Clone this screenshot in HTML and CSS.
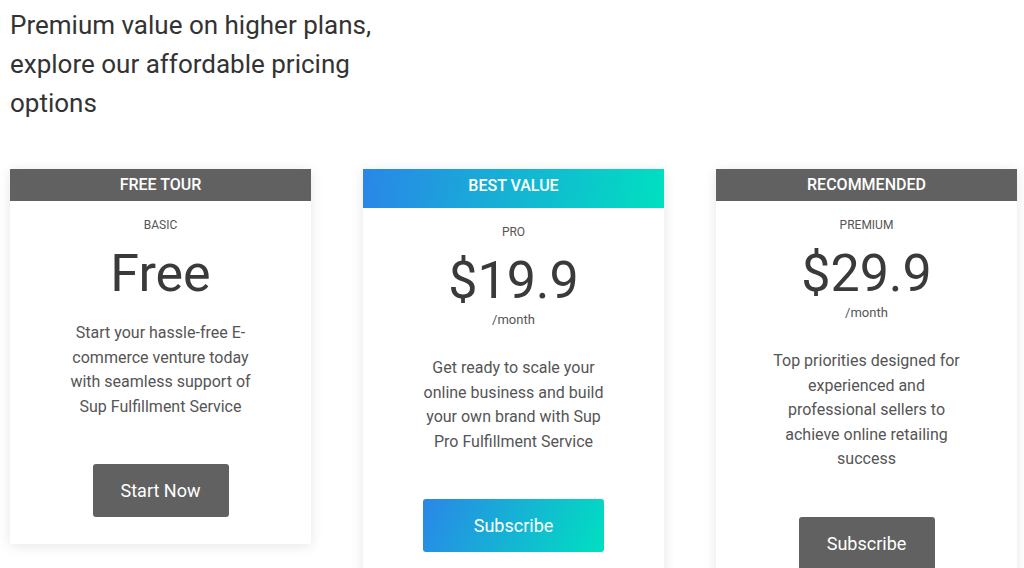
FILE: index.html
```html
<!DOCTYPE html>
<html lang="en">
<head>
<meta charset="utf-8">
<title>Pricing</title>
<link rel="stylesheet" href="styles.css">
</head>
<body>
<h2 class="intro">Premium value on higher plans,<br>explore our affordable pricing<br>options</h2>
<div class="plans">
  <div class="card">
    <div class="card-head">FREE TOUR</div>
    <div class="card-body">
      <div class="tier">BASIC</div>
      <div class="price price-free">Free</div>
      <p class="desc">Start your hassle-free E-commerce venture today with seamless support of Sup Fulfillment Service</p>
      <a class="btn">Start Now</a>
    </div>
  </div>
  <div class="card">
    <div class="card-head card-head-accent">BEST VALUE</div>
    <div class="card-body">
      <div class="tier">PRO</div>
      <div class="price">$19.9</div>
      <div class="period">/month</div>
      <p class="desc">Get ready to scale your online business and build your own brand with Sup Pro Fulfillment Service</p>
      <a class="btn btn-accent">Subscribe</a>
    </div>
  </div>
  <div class="card">
    <div class="card-head">RECOMMENDED</div>
    <div class="card-body">
      <div class="tier">PREMIUM</div>
      <div class="price">$29.9</div>
      <div class="period">/month</div>
      <p class="desc">Top priorities designed for experienced and professional sellers to achieve online retailing success</p>
      <a class="btn">Subscribe</a>
    </div>
  </div>
</div>
</body>
</html>
```

FILE: styles.css
```css
html, body {
  margin: 0;
  padding: 0;
  background: #ffffff;
}
body {
  font-family: Roboto, "Liberation Sans", Arial, sans-serif;
  color: #333;
}
.intro {
  margin: 6px 0 0 10px;
  font-size: 26px;
  line-height: 39px;
  font-weight: 400;
  color: #333333;
}
.plans {
  display: flex;
  align-items: flex-start;
  gap: 52px;
  margin: 46px 0 0 10px;
}
.card {
  width: 301px;
  flex: 0 0 301px;
  background: #fff;
  box-shadow: 0 2px 12px rgba(0, 0, 0, 0.10);
}
.card-head {
  height: 32px;
  line-height: 32px;
  text-align: center;
  background: #616161;
  color: #fff;
  font-size: 16px;
  font-weight: 500;
}
.card-head-accent {
  height: 39px;
  line-height: 33px;
  background: linear-gradient(100deg, #2a86e8 0%, #00e0c0 100%);
}
.card-body {
  display: flex;
  flex-direction: column;
  align-items: center;
  padding: 16px 0 27px;
  text-align: center;
}
.tier {
  font-size: 12px;
  line-height: 17px;
  color: #555;
}
.price {
  margin-top: 10px;
  font-size: 52px;
  line-height: 60px;
  color: #3a3a3a;
}
.period {
  font-size: 13px;
  line-height: 18px;
  color: #555;
}
.desc {
  width: 200px;
  margin: 27px 0 45px;
  font-size: 16px;
  line-height: 24.5px;
  color: #555;
}
.price-free + .desc {
  margin-top: 17px;
}
.btn {
  display: flex;
  align-items: center;
  justify-content: center;
  width: 136px;
  height: 53px;
  border-radius: 3px;
  background: #616161;
  color: #fff;
  font-size: 18px;
}
.btn-accent {
  width: 181px;
  background: linear-gradient(115deg, #2a86e8 0%, #00e0c0 100%);
}
```
